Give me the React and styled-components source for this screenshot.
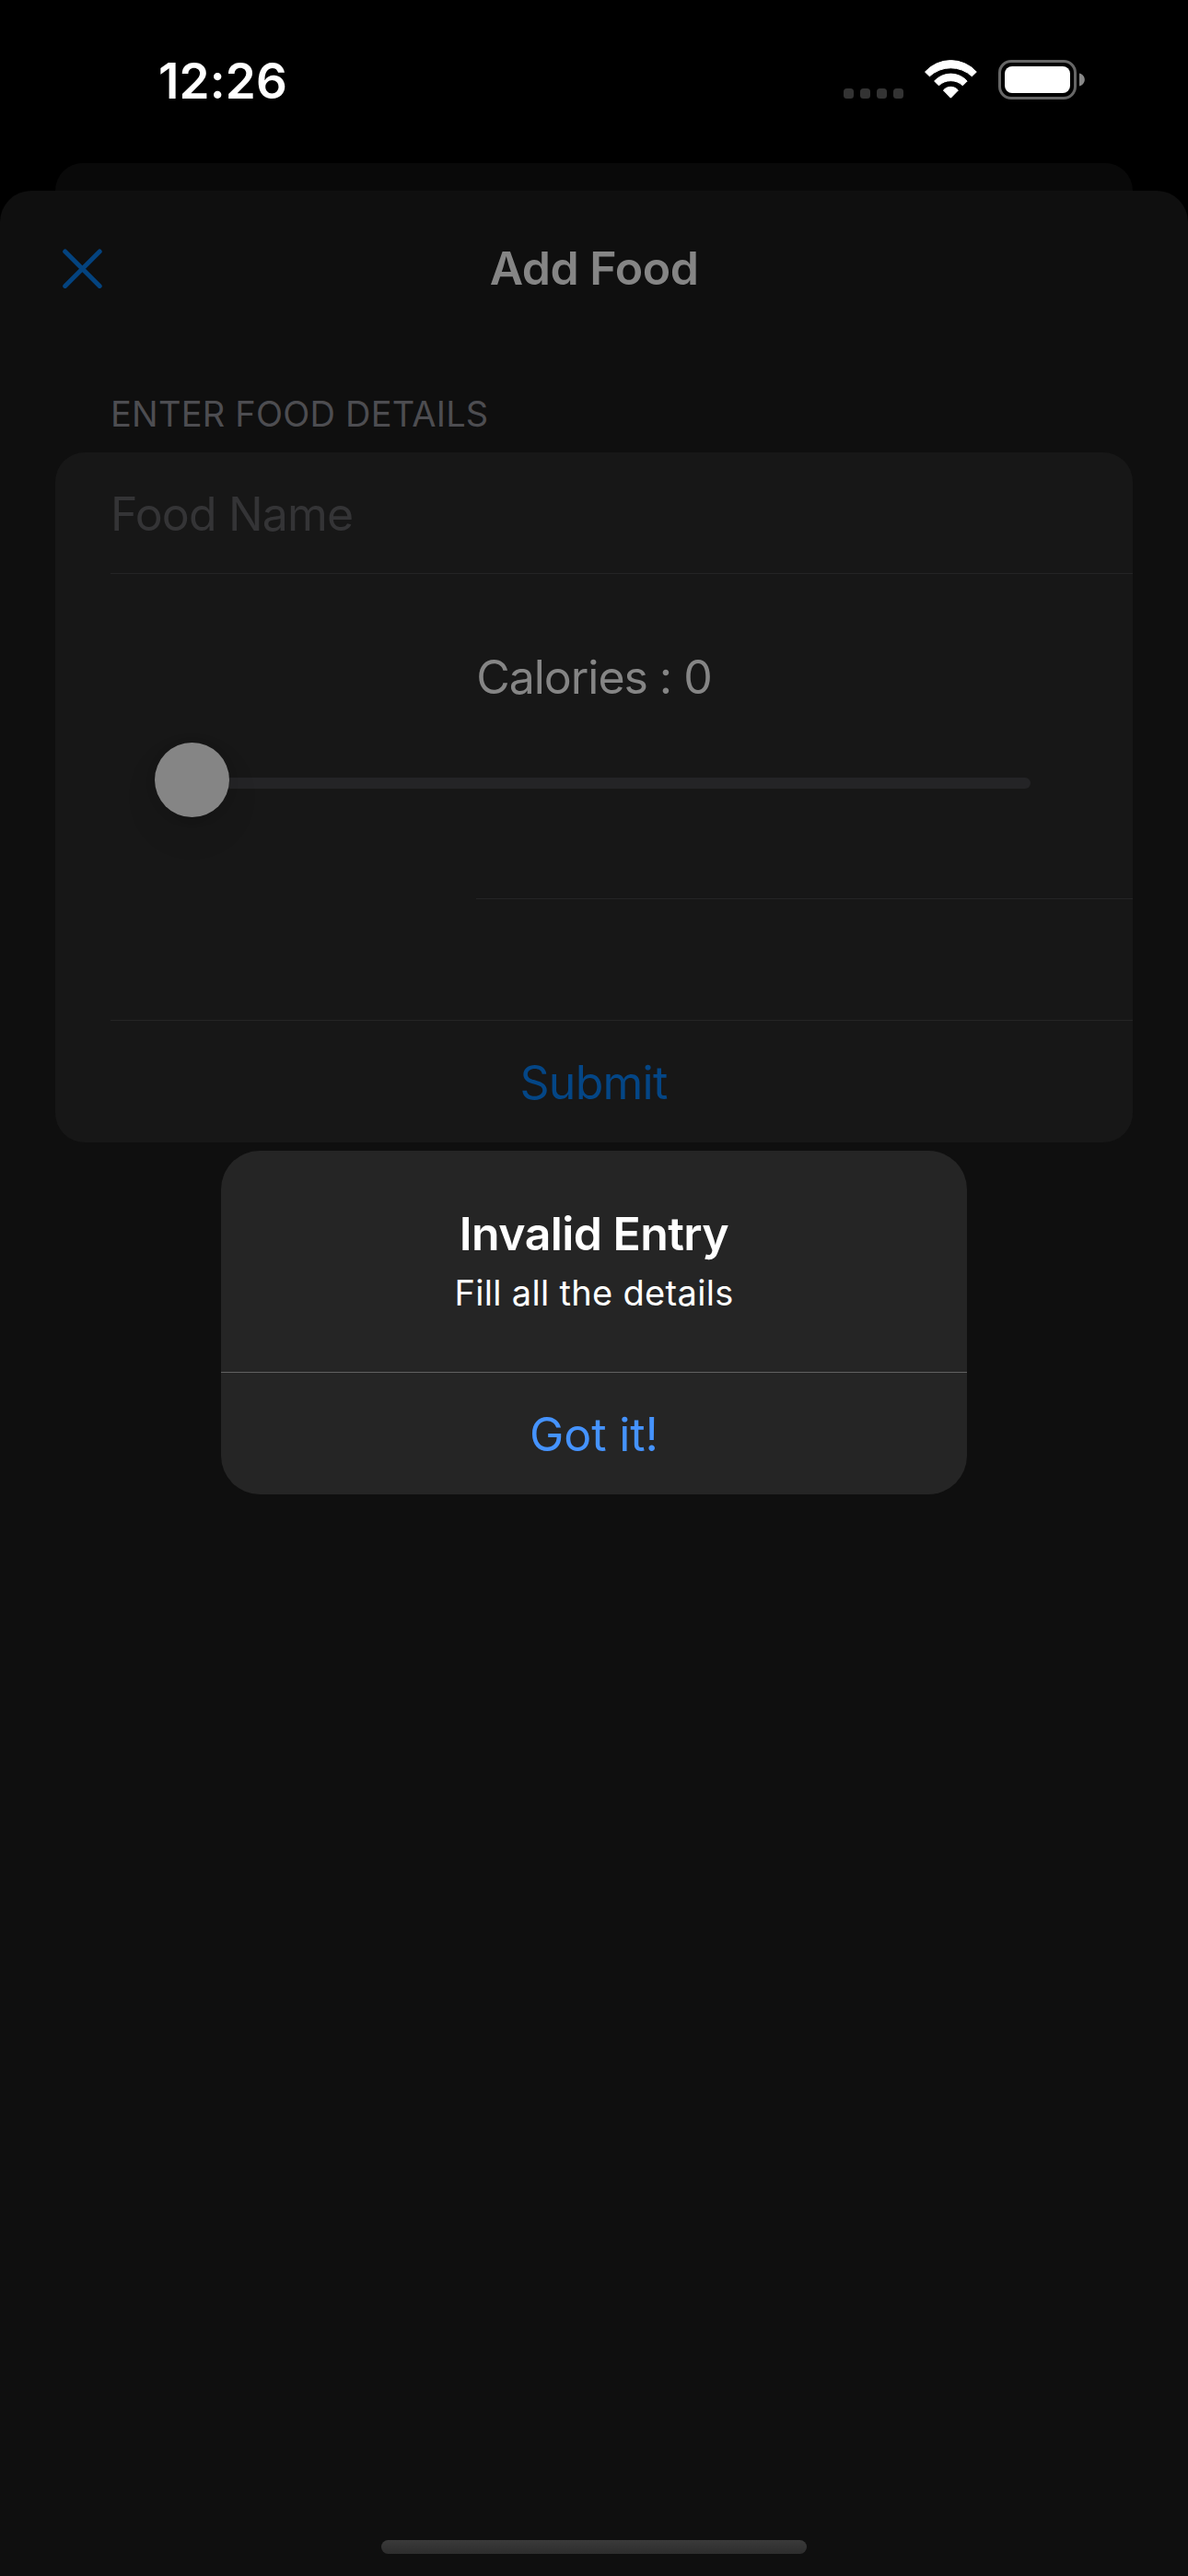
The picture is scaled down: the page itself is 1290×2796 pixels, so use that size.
import React from 'react';
import styled, { createGlobalStyle } from 'styled-components';

const GlobalStyle = createGlobalStyle`
  * { box-sizing: border-box; }
  html, body { margin: 0; background: #000; }
  body { font-family: Inter, "Liberation Sans", sans-serif; color: #fff; }
  button, input { font-family: inherit; }
`;

const Screen = styled.div`
  position: relative;
  width: 1290px;
  height: 2796px;
  overflow: hidden;
  display: flex;
  flex-direction: column;
  background: #000;
`;

const StatusBar = styled.header`
  flex: none;
  height: 177px;
  display: flex;
  justify-content: space-between;
  align-items: flex-start;
  padding: 58px 111px 0 172px;
`;

const Time = styled.time`
  font-size: 53px;
  line-height: 60px;
  font-weight: 600;
  letter-spacing: 0.16px;
`;

const StatusIcons = styled.div`
  display: flex;
  align-items: flex-start;
  padding-top: 7px;
`;

const Signal = styled.div`
  display: flex;
  gap: 7px;
  margin: 31px 22px 0 0;
`;

const SignalDot = styled.span`
  width: 11px;
  height: 11px;
  border-radius: 3.5px;
  background: #333;
`;

const WifiIcon = styled.svg`
  display: block;
  width: 58px;
  height: 43px;
  margin-right: 23px;
`;

const BatteryIcon = styled.svg`
  display: block;
  width: 95px;
  height: 43px;
`;

const BackSheet = styled.div`
  flex: none;
  height: 30px;
  margin: 0 60px;
  border-radius: 30px 30px 0 0;
  background: #090909;
`;

const Sheet = styled.main`
  flex: 1;
  display: flex;
  flex-direction: column;
  border-radius: 34px 34px 0 0;
  background: #0f0f0f;
`;

const NavBar = styled.nav`
  display: grid;
  grid-template-columns: 1fr auto 1fr;
  align-items: center;
  height: 168px;
  padding: 0 67px;
`;

const CloseButton = styled.button`
  justify-self: start;
  display: flex;
  padding: 0;
  border: 0;
  background: none;
  color: #04437f;
`;

const NavTitle = styled.h1`
  margin: 0;
  font-size: 50px;
  line-height: 60px;
  font-weight: 600;
  letter-spacing: -0.47px;
  color: #858585;
`;

const SectionTitle = styled.h2`
  margin: 49px 120px 17px;
  font-size: 38px;
  line-height: 50px;
  font-weight: 400;
  letter-spacing: 0.22px;
  color: #4d4d51;
`;

const Card = styled.section`
  display: flex;
  flex-direction: column;
  margin: 0 60px;
  border-radius: 32px;
  background: #171717;
`;

const Row = styled.div`
  display: flex;
  flex-direction: column;
  height: ${(p) => p.$height || 132}px;
`;

const RowBody = styled.div`
  flex: 1;
  display: flex;
  flex-direction: column;
  justify-content: ${(p) => (p.$top ? 'flex-start' : 'center')};
  padding: ${(p) => p.$top || 2}px 60px 0;
`;

const Divider = styled.div`
  height: 1px;
  margin-left: ${(p) => p.$inset || 60}px;
  background: #242425;
`;

const FoodInput = styled.input`
  width: 100%;
  height: 60px;
  padding: 0;
  border: 0;
  outline: 0;
  background: none;
  font-size: 50px;
  line-height: 60px;
  letter-spacing: -0.84px;
  color: #858585;
  &::placeholder { color: #343436; opacity: 1; }
`;

const Calories = styled.div`
  font-size: 50px;
  line-height: 60px;
  letter-spacing: -1.04px;
  text-align: center;
  color: #858585;
`;

const Slider = styled.div`
  display: grid;
  align-items: center;
  height: 81px;
  margin: 41px 51px 0 48px;
`;

const Track = styled.div`
  grid-area: 1 / 1;
  height: 12px;
  margin: 7px 0 0 3px;
  border-radius: 6px;
  background: #242426;
`;

const Thumb = styled.div`
  grid-area: 1 / 1;
  width: 81px;
  height: 81px;
  border-radius: 50%;
  background: #858585;
  box-shadow: 0 18px 39px rgba(0, 0, 0, 0.08), 0 3px 12px rgba(0, 0, 0, 0.08);
`;

const SubmitButton = styled.button`
  height: 60px;
  padding: 0 1px 0 0;
  border: 0;
  background: none;
  font-size: 50px;
  line-height: 60px;
  letter-spacing: -0.75px;
  color: #044686;
`;

const HomeIndicator = styled.div`
  width: 462px;
  height: 15px;
  margin: auto auto 24px;
  border-radius: 8px;
  background: linear-gradient(#3a3a3a, #2d2d2d);
`;

const Dialog = styled.div`
  position: absolute;
  top: 1249px;
  left: 240px;
  width: 810px;
  height: 373px;
  display: flex;
  flex-direction: column;
  border-radius: 42px;
  background: #252525;
  text-align: center;
`;

const DialogBody = styled.div`
  height: 240px;
  padding-top: 60px;
`;

const DialogTitle = styled.h2`
  margin: 0;
  font-size: 50px;
  line-height: 60px;
  font-weight: 600;
  letter-spacing: -0.57px;
`;

const DialogMessage = styled.p`
  margin: 10px 0 0;
  font-size: 38px;
  line-height: 48px;
  letter-spacing: 0.32px;
`;

const DialogAction = styled.button`
  flex: 1;
  padding: 2px 0 0;
  border: 0;
  border-top: 1px solid #606060;
  background: none;
  font-size: 50px;
  line-height: 60px;
  letter-spacing: -0.11px;
  color: #4593ff;
`;

export default function App() {
  return (
    <Screen>
      <GlobalStyle />
      <StatusBar>
        <Time>12:26</Time>
        <StatusIcons>
          <Signal>
            {[0, 1, 2, 3].map((i) => <SignalDot key={i} />)}
          </Signal>
          <WifiIcon viewBox="0 0 58 43" fill="#fff" stroke="#fff" strokeWidth="1" strokeLinejoin="round">
            <path d="M1.5 13.1A37.4 37.4 0 0 1 57.3 13.1L52.4 17.8A33.8 33.8 0 0 0 6.4 17.8Z" />
            <path d="M11.6 23A24 24 0 0 1 47.2 23L42.4 27.8A19.1 19.1 0 0 0 16.4 27.8Z" />
            <path d="M21.4 33A10.5 10.5 0 0 1 37.4 33L29.4 41.2Z" />
          </WifiIcon>
          <BatteryIcon viewBox="0 0 95 43">
            <rect x="1.5" y="1.5" width="82" height="40" rx="12.5" fill="none" stroke="#666" strokeWidth="3" />
            <rect x="7" y="7" width="71" height="29" rx="8" fill="#fff" />
            <path d="M88 14.5C91.6 15.6 93.8 18.2 93.8 21.5S91.6 27.4 88 28.5Z" fill="#888" />
          </BatteryIcon>
        </StatusIcons>
      </StatusBar>
      <BackSheet />
      <Sheet>
        <NavBar>
          <CloseButton aria-label="Close">
            <svg width="44" height="44" viewBox="0 0 44 44" fill="none" stroke="currentColor" strokeWidth="5" strokeLinecap="round">
              <path d="M3.7 4L41.2 41.5M41.2 4L3.7 41.5" />
            </svg>
          </CloseButton>
          <NavTitle>Add Food</NavTitle>
        </NavBar>
        <SectionTitle>ENTER FOOD DETAILS</SectionTitle>
        <Card>
          <Row>
            <RowBody>
              <FoodInput placeholder="Food Name" />
            </RowBody>
            <Divider />
          </Row>
          <Row $height={353}>
            <RowBody $top={82}>
              <Calories>Calories : 0</Calories>
              <Slider>
                <Track />
                <Thumb />
              </Slider>
            </RowBody>
            <Divider $inset={457} />
          </Row>
          <Row>
            <RowBody />
            <Divider />
          </Row>
          <Row>
            <RowBody>
              <SubmitButton>Submit</SubmitButton>
            </RowBody>
          </Row>
        </Card>
        <HomeIndicator />
      </Sheet>
      <Dialog role="alertdialog">
        <DialogBody>
          <DialogTitle>Invalid Entry</DialogTitle>
          <DialogMessage>Fill all the details</DialogMessage>
        </DialogBody>
        <DialogAction>Got it!</DialogAction>
      </Dialog>
    </Screen>
  );
}
